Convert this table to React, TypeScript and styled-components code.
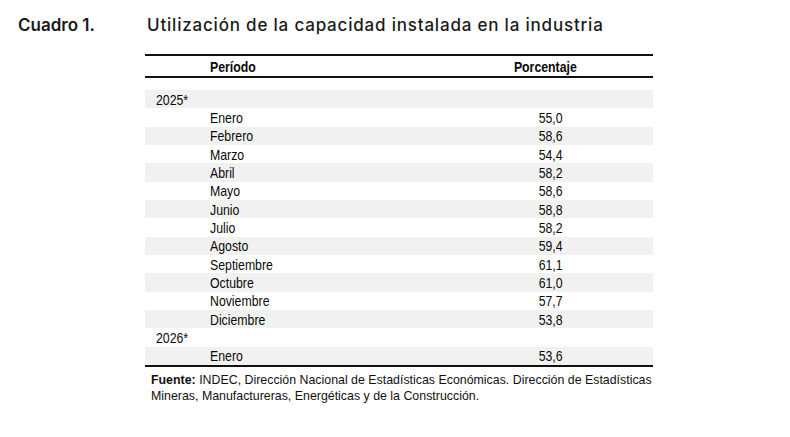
import React from "react";
import styled, { createGlobalStyle } from "styled-components";

const GlobalStyle = createGlobalStyle`
  html, body {
    margin: 0;
    padding: 0;
    background: #fff;
    color: #111;
  }
`;

const Page = styled.div`
  width: 790px;
  height: 437px;
  box-sizing: border-box;
  padding-top: 15px;
  background: #fff;
`;

const Heading = styled.div`
  display: flex;
  align-items: center;
  height: 20px;
  font-family: Inter, "Noto Sans", sans-serif;
  font-size: 17px;
  color: #1a1a1a;
`;

const Label = styled.div`
  width: 147px;
  padding-left: 18px;
  box-sizing: border-box;
  font-weight: 600;
`;

const Title = styled.div`
  font-weight: 500;
  letter-spacing: 0.8px;
`;

const Table = styled.div`
  width: 508px;
  margin: 19px 0 0 145px;
  border-top: 2px solid #111;
  border-bottom: 2px solid #111;
  font-family: "Liberation Sans", Arial, sans-serif;
  font-size: 15px;
  color: #0a0a0a;
`;

const Row = styled.div<{ $shaded?: boolean; $head?: boolean }>`
  display: grid;
  grid-template-columns: 65px 1fr 204px;
  align-items: center;
  height: ${(p) => (p.$head ? "20px" : "18.33px")};
  background: ${(p) => (p.$shaded ? "#f1f1f1" : "transparent")};
  font-weight: ${(p) => (p.$head ? 700 : 400)};
  border-bottom: ${(p) => (p.$head ? "2px solid #111" : "none")};
  margin-bottom: ${(p) => (p.$head ? "12px" : "0")};
`;

/* Arial Narrow look: Liberation Sans squeezed horizontally */
const Narrow = styled.span<{ $center?: boolean }>`
  display: inline-block;
  white-space: nowrap;
  transform: scaleX(0.82);
  transform-origin: ${(p) => (p.$center ? "center" : "left")};
`;

const Year = styled.div`
  grid-column: 1 / 3;
  padding-left: 11px;
`;

const Month = styled.div`
  grid-column: 2;
`;

const Value = styled.div<{ $head?: boolean }>`
  grid-column: 3;
  text-align: center;
  padding-right: ${(p) => (p.$head ? "12px" : "0")};
`;

const Source = styled.div`
  width: 520px;
  margin: 5px 0 0 151px;
  font-family: "Liberation Sans", Arial, sans-serif;
  font-size: 12.38px;
  line-height: 16px;
  color: #111;

  b {
    font-weight: 700;
  }
`;

type Entry = { year: string } | { month: string; value: string };

const data: Entry[] = [
  { year: "2025*" },
  { month: "Enero", value: "55,0" },
  { month: "Febrero", value: "58,6" },
  { month: "Marzo", value: "54,4" },
  { month: "Abril", value: "58,2" },
  { month: "Mayo", value: "58,6" },
  { month: "Junio", value: "58,8" },
  { month: "Julio", value: "58,2" },
  { month: "Agosto", value: "59,4" },
  { month: "Septiembre", value: "61,1" },
  { month: "Octubre", value: "61,0" },
  { month: "Noviembre", value: "57,7" },
  { month: "Diciembre", value: "53,8" },
  { year: "2026*" },
  { month: "Enero", value: "53,6" },
];

export default function App() {
  return (
    <Page>
      <GlobalStyle />
      <Heading>
        <Label>Cuadro 1.</Label>
        <Title>Utilización de la capacidad instalada en la industria</Title>
      </Heading>

      <Table>
        <Row $head>
          <Month>
            <Narrow>Período</Narrow>
          </Month>
          <Value $head>
            <Narrow $center>Porcentaje</Narrow>
          </Value>
        </Row>
        {data.map((d, i) =>
          "year" in d ? (
            <Row key={i} $shaded={i % 2 === 0}>
              <Year>
                <Narrow>{d.year}</Narrow>
              </Year>
            </Row>
          ) : (
            <Row key={i} $shaded={i % 2 === 0}>
              <Month>
                <Narrow>{d.month}</Narrow>
              </Month>
              <Value>
                <Narrow $center>{d.value}</Narrow>
              </Value>
            </Row>
          )
        )}
      </Table>

      <Source>
        <b>Fuente:</b> INDEC, Dirección Nacional de Estadísticas Económicas. Dirección de Estadísticas
        <br />
        Mineras, Manufactureras, Energéticas y de la Construcción.
      </Source>
    </Page>
  );
}
